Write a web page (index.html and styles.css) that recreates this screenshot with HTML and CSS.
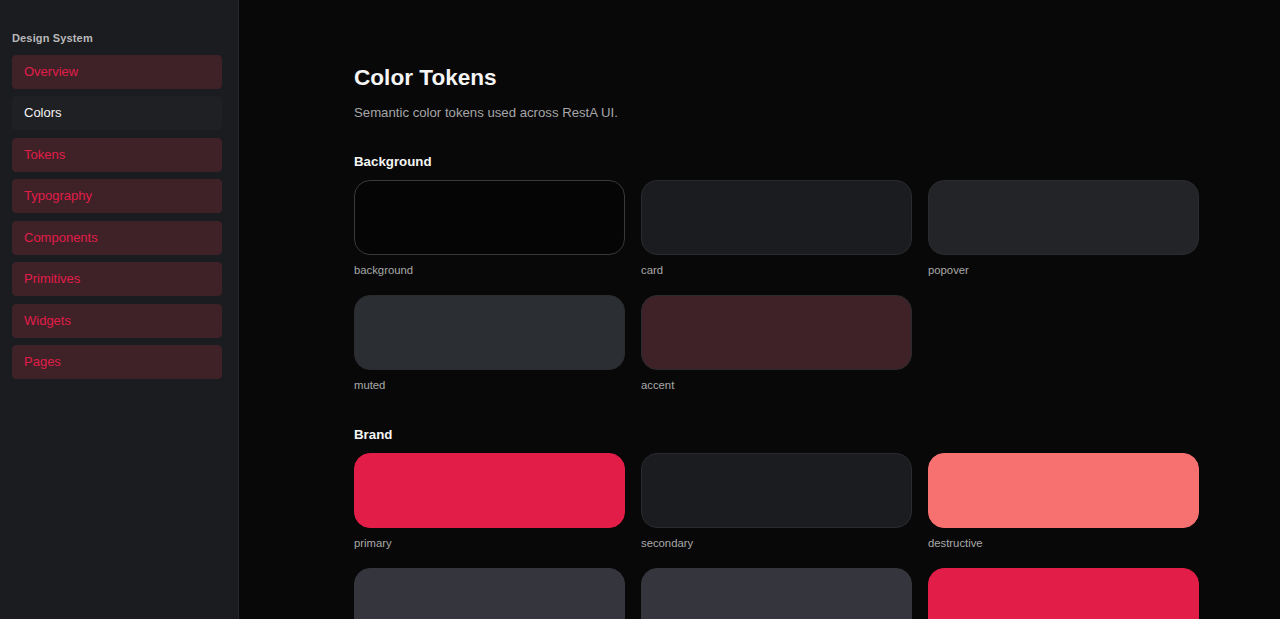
FILE: index.html
```html
<!DOCTYPE html>
<html lang="en">
<head>
<meta charset="utf-8">
<title>Color Tokens</title>
<link rel="stylesheet" href="styles.css">
</head>
<body>
<div class="layout">
  <aside class="sidebar">
    <div class="sidebar-title">Design System</div>
    <nav class="nav">
      <a class="nav-item">Overview</a>
      <a class="nav-item active">Colors</a>
      <a class="nav-item">Tokens</a>
      <a class="nav-item">Typography</a>
      <a class="nav-item">Components</a>
      <a class="nav-item">Primitives</a>
      <a class="nav-item">Widgets</a>
      <a class="nav-item">Pages</a>
    </nav>
  </aside>
  <main class="main">
    <div class="content">
      <h1 class="title">Color Tokens</h1>
      <p class="subtitle">Semantic color tokens used across RestA UI.</p>

      <section class="section">
        <h2 class="section-title">Background</h2>
        <div class="grid">
          <div class="token"><div class="swatch sw-background"></div><span class="label">background</span></div>
          <div class="token"><div class="swatch sw-card"></div><span class="label">card</span></div>
          <div class="token"><div class="swatch sw-popover"></div><span class="label">popover</span></div>
          <div class="token"><div class="swatch sw-muted"></div><span class="label">muted</span></div>
          <div class="token"><div class="swatch sw-accent"></div><span class="label">accent</span></div>
        </div>
      </section>

      <section class="section">
        <h2 class="section-title">Brand</h2>
        <div class="grid">
          <div class="token"><div class="swatch sw-primary"></div><span class="label">primary</span></div>
          <div class="token"><div class="swatch sw-secondary"></div><span class="label">secondary</span></div>
          <div class="token"><div class="swatch sw-destructive"></div><span class="label">destructive</span></div>
          <div class="token"><div class="swatch sw-border"></div><span class="label">border</span></div>
          <div class="token"><div class="swatch sw-input"></div><span class="label">input</span></div>
          <div class="token"><div class="swatch sw-ring"></div><span class="label">ring</span></div>
        </div>
      </section>
    </div>
  </main>
</div>
</body>
</html>
```
FILE: styles.css
```css
* { box-sizing: border-box; }
html, body {
  margin: 0;
  padding: 0;
  height: 100%;
  overflow: hidden;
  background: #080808;
  font-family: "Liberation Sans", Arial, sans-serif;
  color: #f2f2f2;
}
.layout {
  display: flex;
  height: 100vh;
}
.sidebar {
  width: 239px;
  flex-shrink: 0;
  background: #1b1c1f;
  border-right: 1px solid #26272a;
  padding: 32px 16px 0 12px;
}
.sidebar-title {
  font-size: 11px;
  font-weight: 700;
  color: #b9b9bb;
  line-height: 13px;
  margin-bottom: 10px;
  letter-spacing: 0.15px;
}
.nav {
  display: flex;
  flex-direction: column;
  gap: 7.45px;
}
.nav-item {
  display: block;
  height: 34px;
  line-height: 32px;
  padding: 0 11px;
  border-radius: 4px;
  font-size: 13px;
  color: #e11d48;
  background: #3f2128;
  border: 1px solid #3f2128;
}
.nav-item.active {
  color: #f5f5f5;
  background: #1f2023;
  border-color: #1f2023;
}
.main {
  flex: 1;
  overflow: hidden;
}
.content {
  width: 845px;
  margin-left: 115px;
  padding-top: 63px;
}
.title {
  margin: 0;
  font-size: 22.6px;
  line-height: 30px;
  font-weight: 700;
  color: #f5f5f5;
}
.subtitle {
  margin: 12px 0 0;
  font-size: 13.2px;
  line-height: 16px;
  color: #a6a6a8;
}
.section {
  margin-top: 33px;
}
.section + .section {
  margin-top: 35px;
}
.section-title {
  margin: 0 0 10px;
  font-size: 13.3px;
  line-height: 16px;
  font-weight: 700;
  color: #f5f5f5;
}
.grid {
  display: grid;
  grid-template-columns: repeat(3, 1fr);
  column-gap: 16px;
  row-gap: 18px;
}
.token {
  display: flex;
  flex-direction: column;
  gap: 8px;
}
.swatch {
  height: 75px;
  border-radius: 16px;
  border: 1px solid #2a2b2e;
}
.label {
  font-size: 11.3px;
  line-height: 14px;
  color: #a8a8aa;
}
.sw-background { background: #050505; border-color: #38393c; }
.sw-card { background: #1b1c1f; }
.sw-popover { background: #222427; }
.sw-muted { background: #2b2e33; }
.sw-accent { background: #3f2128; }
.sw-primary { background: #e11d48; border-color: #e11d48; }
.sw-secondary { background: #1b1c1f; }
.sw-destructive { background: #f87171; border-color: #f87171; }
.sw-border { background: #35363d; border-color: #35363d; }
.sw-input { background: #35363d; border-color: #35363d; }
.sw-ring { background: #e11d48; border-color: #e11d48; }
```
